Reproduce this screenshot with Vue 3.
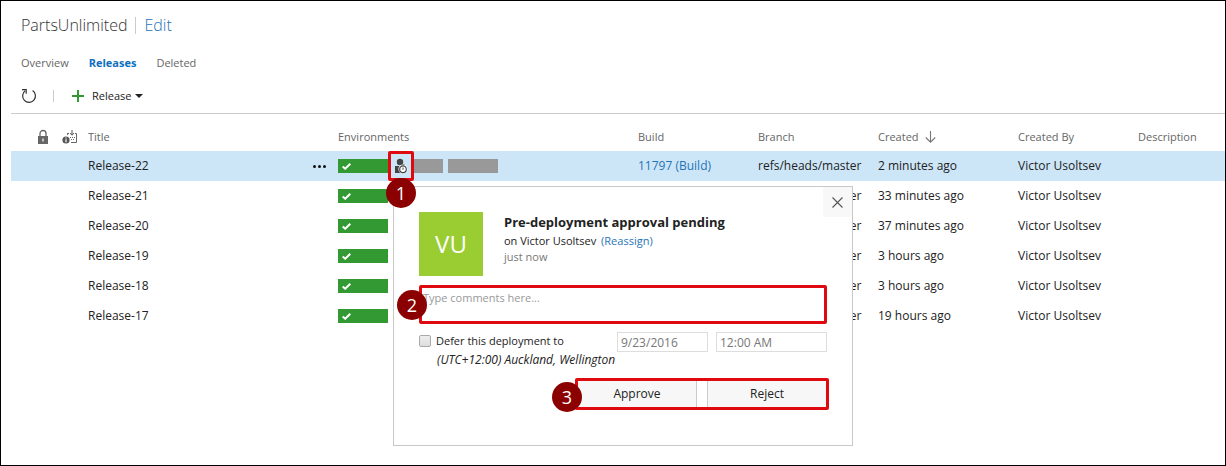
<script setup>
import { ref } from 'vue'

const releases = [
  { title: 'Release-22', created: '2 minutes ago', selected: true },
  { title: 'Release-21', created: '33 minutes ago' },
  { title: 'Release-20', created: '37 minutes ago' },
  { title: 'Release-19', created: '3 hours ago' },
  { title: 'Release-18', created: '3 hours ago' },
  { title: 'Release-17', created: '19 hours ago' },
]

const comment = ref('')
const deferred = ref(false)
const deferDate = ref('9/23/2016')
const deferTime = ref('12:00 AM')
</script>

<template>
  <main class="page">
    <h1 class="heading">
      <span>PartsUnlimited</span>
      <span class="bar"></span>
      <a href="#edit">Edit</a>
    </h1>

    <nav class="tabs">
      <a href="#overview">Overview</a>
      <a href="#releases" class="current">Releases</a>
      <a href="#deleted">Deleted</a>
    </nav>

    <div class="toolbar">
      <button class="tool" aria-label="Refresh">
        <svg width="16" height="16" viewBox="0 0 16 16" fill="none" stroke="#333" stroke-width="1.2">
          <path d="M11.6 2.6a6.4 6.4 0 1 1-7.4.2" />
          <path d="M1 1.6h4.2v4.2" />
        </svg>
      </button>
      <span class="split"></span>
      <button class="tool">
        <svg width="12" height="12" viewBox="0 0 12 12" stroke="#339933" stroke-width="2">
          <path d="M6 0v12M0 6h12" />
        </svg>
        <span class="tool-label">Release</span>
        <svg width="8" height="4" viewBox="0 0 8 4" fill="#222"><path d="M0 0h8L4 4z" /></svg>
      </button>
    </div>

    <section class="releases">
      <table>
        <colgroup>
          <col class="c-lock" /><col class="c-state" /><col class="c-title" /><col class="c-env" />
          <col class="c-mid" /><col class="c-mid" /><col class="c-created" /><col class="c-mid" /><col />
        </colgroup>
        <thead>
          <tr>
            <th class="icon-head" aria-label="Locked">
              <svg width="12" height="16" viewBox="0 0 12 16">
                <path d="M3 7V4.5a3 3 0 0 1 6 0V7" fill="none" stroke="#666" stroke-width="1.3" />
                <path d="M1 7h10v8H1z" fill="#666" />
                <path d="M6 9.5v3" stroke="#fff" stroke-width="1.2" />
              </svg>
            </th>
            <th class="icon-head" aria-label="State">
              <svg width="16" height="16" viewBox="0 0 16 16" fill="none">
                <circle cx="4" cy="11" r="3.6" fill="#555" />
                <path d="M4 8.4v1.2M4 10.3v3" stroke="#fff" stroke-width="1.2" />
                <path d="M10 1v5M8 4l2 2.2L12 4" stroke="#555" />
                <path d="M13 4.500h1.500v9H9" stroke="#666" />
                <path d="M5.500 4v2M8 8.500h1M10 8.500h1M12 8.500h1M9 10.500h1M11 10.500h1M6 4.500h1" stroke="#666" />
              </svg>
            </th>
            <th>Title</th>
            <th>Environments</th>
            <th>Build</th>
            <th>Branch</th>
            <th>
              <span class="sorted">Created
                <svg width="11" height="12" viewBox="0 0 11 12" fill="none" stroke="#777" stroke-width="1.1">
                  <path d="M5.500 0v11M.8 6.500l4.700 4.700 4.700-4.700" />
                </svg>
              </span>
            </th>
            <th>Created By</th>
            <th>Description</th>
          </tr>
        </thead>
        <tbody>
          <tr v-for="r in releases" :key="r.title" :class="{ selected: r.selected }">
            <td></td>
            <td></td>
            <td>
              <span class="title-cell">
                {{ r.title }}
                <button v-if="r.selected" class="more" aria-label="More actions">
                  <svg width="13" height="3" viewBox="0 0 13 3" fill="#111">
                    <circle cx="1.500" cy="1.500" r="1.500" /><circle cx="6.500" cy="1.500" r="1.500" /><circle cx="11.500" cy="1.500" r="1.500" />
                  </svg>
                </button>
              </span>
            </td>
            <td>
              <div class="envs">
                <span class="env done">
                  <svg width="9" height="7" viewBox="0 0 9 7" fill="none" stroke="#fff" stroke-width="2">
                    <path d="M.7 3.400l2.500 2.300L8.300.8" />
                  </svg>
                </span>
                <template v-if="r.selected">
                  <button class="pending" aria-label="Pre-deployment approval pending">
                    <svg width="14" height="16" viewBox="0 0 14 16">
                      <circle cx="6" cy="4" r="3.200" fill="#444" />
                      <path d="M1 8h5v7H1z" fill="#444" />
                      <circle cx="9" cy="11" r="4.600" fill="#fff" />
                      <circle cx="9" cy="11.300" r="3.300" fill="#fff" stroke="#444" stroke-width="1.200" />
                      <path d="M9 9.500v2.300M7.500 7h3" fill="none" stroke="#444" />
                    </svg>
                    <span class="marker below">1</span>
                  </button>
                  <span class="env waiting partial"></span>
                  <span class="env waiting last"></span>
                </template>
              </div>
            </td>
            <td><a v-if="r.selected" href="#build">11797 (Build)</a></td>
            <td>refs/heads/master</td>
            <td>{{ r.created }}</td>
            <td>Victor Usoltsev</td>
            <td></td>
          </tr>
        </tbody>
      </table>

      <form class="popup" @submit.prevent>
        <button type="button" class="close" aria-label="Close">
          <svg width="11" height="11" viewBox="0 0 11 11" stroke="#555" stroke-width="1.100">
            <path d="M.5.5l10 10M10.500.5l-10 10" />
          </svg>
        </button>

        <div class="who">
          <div class="avatar">VU</div>
          <div class="summary">
            <h2>Pre-deployment approval pending</h2>
            <p>on Victor Usoltsev <a href="#reassign">(Reassign)</a></p>
            <p class="when">just now</p>
          </div>
        </div>

        <div class="comment">
          <textarea v-model="comment" aria-label="Comments" placeholder="Type comments here..."></textarea>
          <span class="marker beside">2</span>
        </div>

        <div class="defer">
          <div class="defer-text">
            <label><input v-model="deferred" type="checkbox" />Defer this deployment to</label>
            <em>(UTC+12:00) Auckland, Wellington</em>
          </div>
          <input v-model="deferDate" class="field date" type="text" aria-label="Deployment date" />
          <input v-model="deferTime" class="field time" type="text" aria-label="Deployment time" />
        </div>

        <div class="actions">
          <button type="submit">Approve</button>
          <button type="button">Reject</button>
          <span class="marker before">3</span>
        </div>
      </form>
    </section>
  </main>
</template>

<style>
body {
  margin: 0;
  background: #fff;
}
</style>

<style scoped>
* {
  box-sizing: border-box;
}

.page {
  min-height: 100vh;
  padding: 12px 0 0 10px;
  border: 1px solid #000;
  color: #222;
  font: 12px/16px "Open Sans", "Noto Sans", sans-serif;
}

a {
  color: #1f74b8;
  text-decoration: none;
}

button {
  padding: 0;
  border: 0;
  background: none;
  color: inherit;
  font: inherit;
}

svg {
  display: block;
}

.heading {
  display: flex;
  align-items: center;
  gap: 8px;
  margin: 0;
  padding-left: 10px;
  color: #333;
  font-size: 16px;
  font-weight: 300;
  line-height: 24px;
}

.heading .bar {
  width: 1px;
  height: 17px;
  background: #ccc;
}

.tabs {
  display: flex;
  gap: 20px;
  margin-top: 18px;
  padding-left: 10px;
  font-size: 11px;
}

.tabs a {
  color: #666;
}

.tabs .current {
  color: #106ebe;
  font-weight: 700;
}

.toolbar {
  display: flex;
  align-items: center;
  height: 43px;
  padding: 8px 0 0 10px;
  border-bottom: 1px solid #ccc;
  font-size: 11px;
}

.split {
  width: 1px;
  height: 12px;
  margin: 0 18px 0 16px;
  background: #ccc;
}

.tool {
  display: flex;
  align-items: center;
}

.tool-label {
  margin: 0 4px 0 8px;
}

.releases {
  position: relative;
}

table {
  width: 100%;
  border-collapse: collapse;
  table-layout: fixed;
}

.c-lock { width: 45px; }
.c-state { width: 26px; }
.c-title { width: 250px; }
.c-env { width: 300px; }
.c-mid { width: 120px; }
.c-created { width: 140px; }

th,
td {
  height: 30px;
  padding: 0 6px;
  text-align: left;
  white-space: nowrap;
}

th {
  height: 37px;
  padding-top: 8px;
  color: #666;
  font-size: 11px;
  font-weight: 400;
}

.icon-head svg {
  margin-left: auto;
}

.icon-head:first-child {
  padding-right: 7px;
}

.icon-head + .icon-head {
  padding-right: 4px;
}

.selected {
  background: #cde6f7;
}

.title-cell,
.sorted {
  display: flex;
  align-items: center;
  gap: 6px;
}

.title-cell {
  justify-content: space-between;
}

.envs {
  display: flex;
  align-items: center;
}

.env {
  display: flex;
  align-items: center;
  width: 50px;
  height: 14px;
}

.done {
  padding-left: 4px;
  background: #339933;
}

.waiting {
  background: #999;
}

.partial {
  width: 29px;
}

.last {
  margin-left: 5px;
}

.pending {
  position: relative;
  display: flex;
  align-items: center;
  justify-content: center;
  width: 26px;
  height: 30px;
  border: 3px solid #de0a10;
  border-radius: 2px;
}

.marker {
  position: absolute;
  z-index: 3;
  width: 30px;
  height: 30px;
  border-radius: 50%;
  background: #8b0000;
  color: #fff;
  font: 18px/30px "Open Sans", sans-serif;
  text-align: center;
}

.below {
  top: 24px;
  left: -5px;
}

.beside {
  top: 5px;
  left: -22px;
}

.before {
  top: 1px;
  left: -26px;
}

.popup {
  position: absolute;
  top: 72px;
  left: 382px;
  z-index: 2;
  width: 460px;
  padding: 25px 25px 35px;
  border: 1px solid #c8c8c8;
  background: #fff;
}

.close {
  position: absolute;
  top: 0;
  right: 0;
  display: grid;
  place-items: center;
  width: 29px;
  height: 30px;
  background: #f8f8f8;
}

.who {
  display: flex;
  gap: 21px;
}

.avatar {
  width: 64px;
  height: 64px;
  background: #9acd32;
  color: #fff;
  font-size: 24px;
  line-height: 64px;
  text-align: center;
}

.summary h2 {
  margin: 0;
  font-size: 13px;
  font-weight: 700;
  line-height: 21px;
}

.summary p {
  margin: 0;
  font-size: 11px;
}

.summary a {
  margin-left: 2px;
}

.summary .when {
  color: #777;
}

.comment {
  position: relative;
  margin-top: 9px;
}

.comment textarea {
  display: block;
  width: 100%;
  height: 39px;
  padding: 2px 1px;
  border: 3px solid #de0a10;
  border-radius: 2px;
  outline: 0;
  background: #fff;
  color: #222;
  font: inherit;
  font-size: 11px;
  resize: none;
}

.comment textarea::placeholder {
  color: #999;
  opacity: 1;
}

.defer {
  display: flex;
  align-items: flex-start;
  margin-top: 8px;
}

.defer-text {
  flex: 1;
}

.defer-text label {
  display: flex;
  align-items: center;
  gap: 5px;
  height: 18px;
  font-size: 11px;
}

.defer-text em {
  display: block;
  margin: 2px 0 0 18px;
}

.defer-text input {
  appearance: none;
  width: 12px;
  height: 12px;
  margin: 0;
  border: 1px solid #aaa;
  border-radius: 2px;
  background: linear-gradient(#eee, #ddd);
}

.defer-text input:checked {
  background: #106ebe;
}

.field {
  height: 20px;
  padding: 0 3px;
  border: 1px solid #ddd;
  border-radius: 0;
  background: #fff;
  color: #777;
  font: inherit;
}

.date {
  width: 91px;
  margin-right: 8px;
}

.time {
  width: 111px;
}

.actions {
  position: relative;
  display: flex;
  justify-content: space-between;
  width: 254px;
  height: 32px;
  margin: 10px -2px 0 auto;
  border: 3px solid #de0a10;
  border-radius: 2px;
}

.actions button {
  width: 119px;
  background: #f7f7f7;
}

.actions button:first-child {
  border-right: 1px solid #ccc;
}

.actions button:nth-child(2) {
  border-left: 1px solid #ccc;
}
</style>
